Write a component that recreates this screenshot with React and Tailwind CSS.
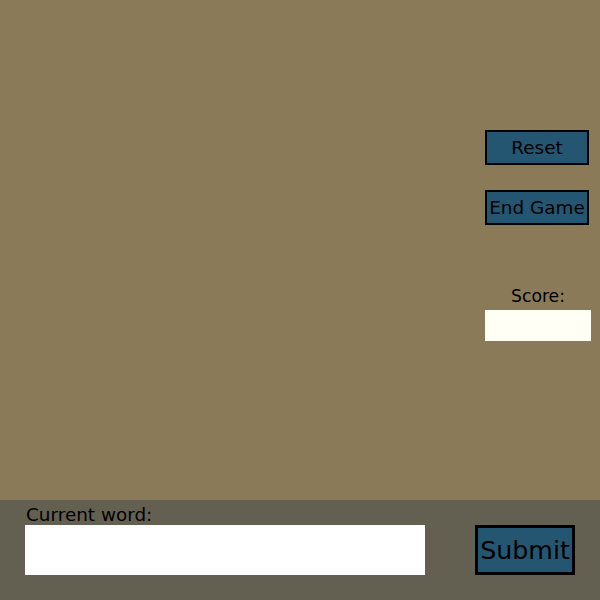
export default function App() {
    return (
        <div
            className="w-[600px] h-[600px] flex flex-col text-black"
            style={{ fontFamily: '"DejaVu Sans", sans-serif' }}
        >
            {/* Board area */}
            <div className="h-[500px] bg-[#8b7a58] flex justify-end">
                <div className="w-[115px] pt-[130px] flex flex-col items-start">
                    <button className="w-[104px] h-[35px] pt-[2px] bg-[#245672] border-2 border-black text-[18.4px] leading-none flex items-center justify-center">
                        Reset
                    </button>
                    <button className="mt-[25px] w-[104px] h-[35px] pt-[2px] bg-[#245672] border-2 border-black text-[18.4px] leading-none flex items-center justify-center whitespace-nowrap">
                        End Game
                    </button>
                    <div className="mt-[61px] w-[106px] flex flex-col items-center">
                        <span className="text-[17.2px] leading-[20px]">Score:</span>
                        <div className="mt-[4px] w-[106px] h-[31px] bg-[#fffff6]" />
                    </div>
                </div>
            </div>

            {/* Word entry */}
            <div className="h-[100px] bg-[#636051] flex items-start pl-[25px] pt-[4px]">
                <div className="flex flex-col w-[400px]">
                    <span className="pl-[1px] text-[18.4px] leading-[21px]">Current word:</span>
                    <div className="h-[50px] bg-white" />
                </div>
                <button className="ml-[50px] mt-[21px] w-[100px] h-[50px] pt-[2px] bg-[#245672] border-[3px] border-black text-[25.3px] leading-none flex items-center justify-center">
                    Submit
                </button>
            </div>
        </div>
    );
}
